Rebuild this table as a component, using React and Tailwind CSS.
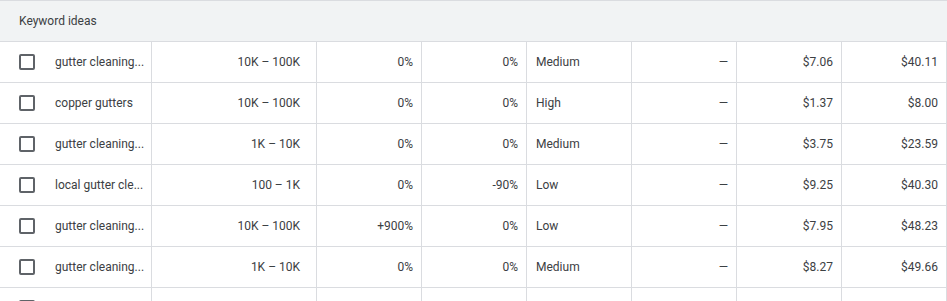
const rows = [
  ["gutter cleaning...", "10K – 100K", "0%", "0%", "Medium", "—", "$7.06", "$40.11"],
  ["copper gutters", "10K – 100K", "0%", "0%", "High", "—", "$1.37", "$8.00"],
  ["gutter cleaning...", "1K – 10K", "0%", "0%", "Medium", "—", "$3.75", "$23.59"],
  ["local gutter cle...", "100 – 1K", "0%", "-90%", "Low", "—", "$9.25", "$40.30"],
  ["gutter cleaning...", "10K – 100K", "+900%", "0%", "Low", "—", "$7.95", "$48.23"],
  ["gutter cleaning...", "1K – 10K", "0%", "0%", "Medium", "—", "$8.27", "$49.66"],
  ["", "", "", "", "", "", "", ""],
];

const Checkbox = () => (
  <span className="block w-4 h-4 shrink-0 rounded-[2px] border-2 border-[#5f6368] bg-white" />
);

export default function App() {
  return (
    <div className="w-[947px] h-[301px] overflow-hidden bg-white text-[12px] text-[#3c4043] font-['Roboto',sans-serif]">
      <div className="h-[42px] flex items-center px-[19px] bg-[#f1f3f4] border-y border-[#dadce0]">
        Keyword ideas
      </div>
      {rows.map((r, i) => (
        <div
          key={i}
          className="grid grid-cols-[152px_165px_105px_105px_105px_105px_105px_105px] h-[41px] border-b border-[#dadce0]"
        >
          <div className="flex items-center pl-[19px] pr-2 gap-5 border-r border-[#dadce0] min-w-0 whitespace-nowrap">
            <Checkbox />
            <span>{r[0]}</span>
          </div>
          <div className="flex items-center justify-end pr-4 border-r border-[#dadce0]">{r[1]}</div>
          <div className="flex items-center justify-end pr-2 border-r border-[#dadce0]">{r[2]}</div>
          <div className="flex items-center justify-end pr-2 border-r border-[#dadce0]">{r[3]}</div>
          <div className="flex items-center pl-[9px] border-r border-[#dadce0]">{r[4]}</div>
          <div className="flex items-center justify-end pr-2 border-r border-[#dadce0]">{r[5]}</div>
          <div className="flex items-center justify-end pr-2 border-r border-[#dadce0]">{r[6]}</div>
          <div className="flex items-center justify-end pr-2 border-r border-[#dadce0]">{r[7]}</div>
        </div>
      ))}
    </div>
  );
}
